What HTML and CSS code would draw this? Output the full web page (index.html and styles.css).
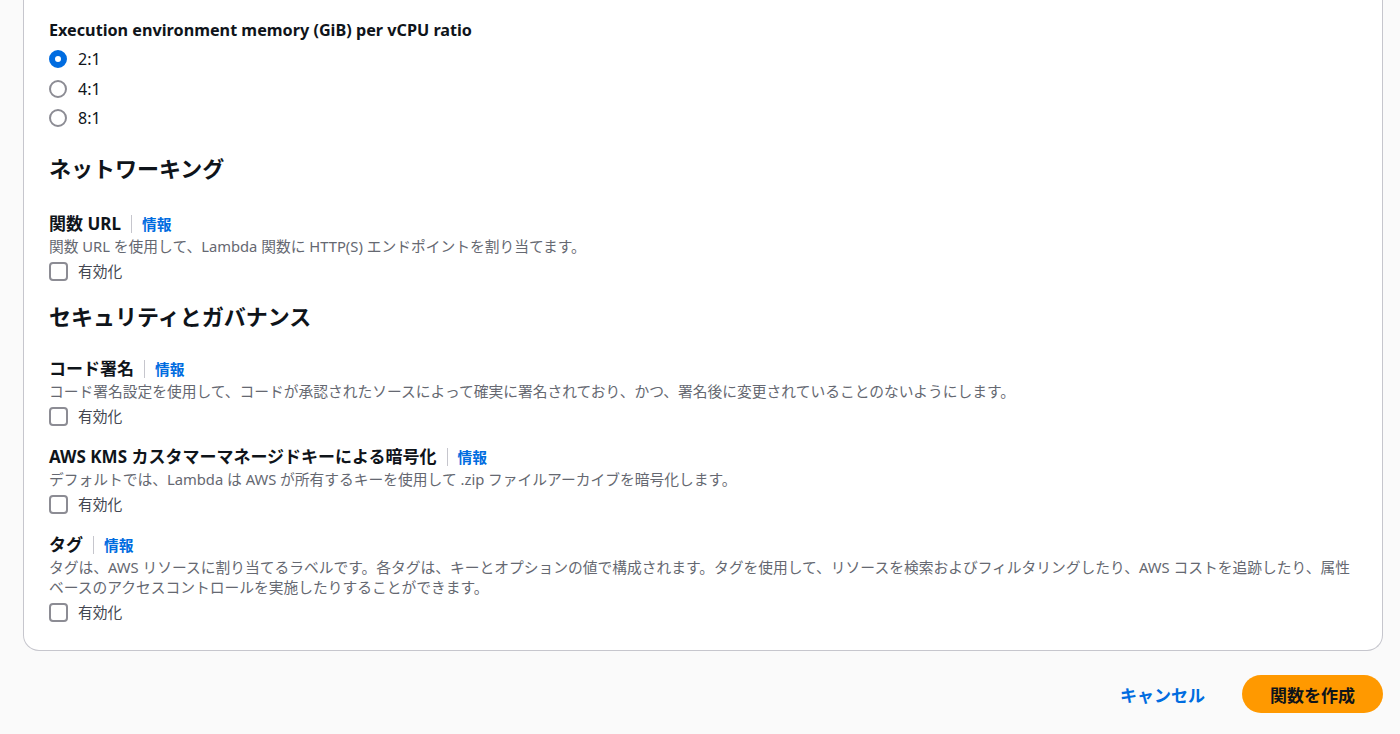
FILE: index.html
```html
<!DOCTYPE html>
<html lang="ja">
  <head>
    <meta charset="UTF-8" />
    <meta name="viewport" content="width=device-width, initial-scale=1.0" />
    <title>関数の作成</title>
    <link rel="stylesheet" href="styles.css">
  </head>
  <body>
    <div class="card">
      <div class="field">
        <div class="field-label latin">Execution environment memory (GiB) per vCPU ratio</div>
        <div class="radio-group">
          <label class="radio"><span class="radio-dot checked"></span>2:1</label>
          <label class="radio"><span class="radio-dot"></span>4:1</label>
          <label class="radio"><span class="radio-dot"></span>8:1</label>
        </div>
      </div>

      <h2 class="section-title">ネットワーキング</h2>

      <div class="field">
        <div class="field-label">関数 URL<span class="sep"></span><a class="info" href="#">情報</a></div>
        <div class="field-desc">関数 URL を使用して、Lambda 関数に HTTP(S) エンドポイントを割り当てます。</div>
        <label class="check"><span class="box"></span>有効化</label>
      </div>

      <h2 class="section-title second">セキュリティとガバナンス</h2>

      <div class="field">
        <div class="field-label">コード署名<span class="sep"></span><a class="info" href="#">情報</a></div>
        <div class="field-desc">コード署名設定を使用して、コードが承認されたソースによって確実に署名されており、かつ、署名後に変更されていることのないようにします。</div>
        <label class="check"><span class="box"></span>有効化</label>
      </div>

      <div class="field">
        <div class="field-label">AWS KMS カスタマーマネージドキーによる暗号化<span class="sep"></span><a class="info" href="#">情報</a></div>
        <div class="field-desc">デフォルトでは、Lambda は AWS が所有するキーを使用して .zip ファイルアーカイブを暗号化します。</div>
        <label class="check"><span class="box"></span>有効化</label>
      </div>

      <div class="field">
        <div class="field-label">タグ<span class="sep"></span><a class="info" href="#">情報</a></div>
        <div class="field-desc">タグは、AWS リソースに割り当てるラベルです。各タグは、キーとオプションの値で構成されます。タグを使用して、リソースを検索およびフィルタリングしたり、AWS コストを追跡したり、属性ベースのアクセスコントロールを実施したりすることができます。</div>
        <label class="check"><span class="box"></span>有効化</label>
      </div>
    </div>

    <div class="actions">
      <a class="cancel" href="#">キャンセル</a>
      <button class="primary">関数を作成</button>
    </div>
  </body>
</html>
```

FILE: styles.css
```css
body {
  margin: 0;
  padding: 0 17px 0 23px;
  background-color: #fafafa;
  color: #0f141a;
  font-family: "Noto Sans", "Noto Sans CJK JP", sans-serif;
}
.card {
  background-color: #fff;
  border: 1px solid #c6c6cd;
  border-top: none;
  border-radius: 0 0 16px 16px;
  padding: 19px 25px 27px;
}
.field {
  margin-bottom: 19px;
}
.field:last-child {
  margin-bottom: 0;
}
.field-label {
  display: flex;
  align-items: center;
  font-size: 17px;
  font-weight: bold;
  line-height: 22px;
}
.field-label.latin {
  font-size: 16.2px;
}
.sep {
  width: 1px;
  height: 18px;
  background-color: #c6c6cd;
  margin: 0 10px;
}
.info {
  color: #006ce0;
  font-size: 14.75px;
  font-weight: bold;
  text-decoration: none;
}
.field-desc {
  margin-top: 1px;
  font-size: 14.75px;
  line-height: 20px;
  color: #656871;
}
.radio-group {
  display: flex;
  flex-direction: column;
  gap: 7.5px;
  margin-top: 7px;
}
.radio, .check {
  display: flex;
  align-items: center;
  line-height: 22px;
}
.radio {
  gap: 11px;
  font-size: 16px;
}
.radio-dot {
  width: 14px;
  height: 14px;
  border: 2px solid #8c8c94;
  border-radius: 50%;
  box-sizing: content-box;
}
.radio-dot.checked {
  width: 6px;
  height: 6px;
  border: 6px solid #006ce0;
}
.check {
  gap: 10px;
  margin-top: 4px;
  font-size: 14.75px;
  color: #424650;
}
.box {
  width: 15px;
  height: 15px;
  border: 2px solid #8c8c94;
  border-radius: 4px;
}
.section-title {
  font-size: 22px;
  line-height: 30px;
  margin: 24px 0 30px;
}
.section-title.second {
  margin-top: 4px;
  margin-bottom: 27px;
}
.actions {
  display: flex;
  justify-content: flex-end;
  align-items: center;
  gap: 17px;
  margin-top: 24px;
}
.cancel {
  padding: 0 20px;
  color: #006ce0;
  font-size: 17px;
  font-weight: bold;
  text-decoration: none;
}
.primary {
  height: 38px;
  padding: 0 28px;
  border: none;
  border-radius: 20px;
  background-color: #ff9900;
  color: #0f141a;
  font-family: inherit;
  font-size: 17px;
  font-weight: bold;
}
```
